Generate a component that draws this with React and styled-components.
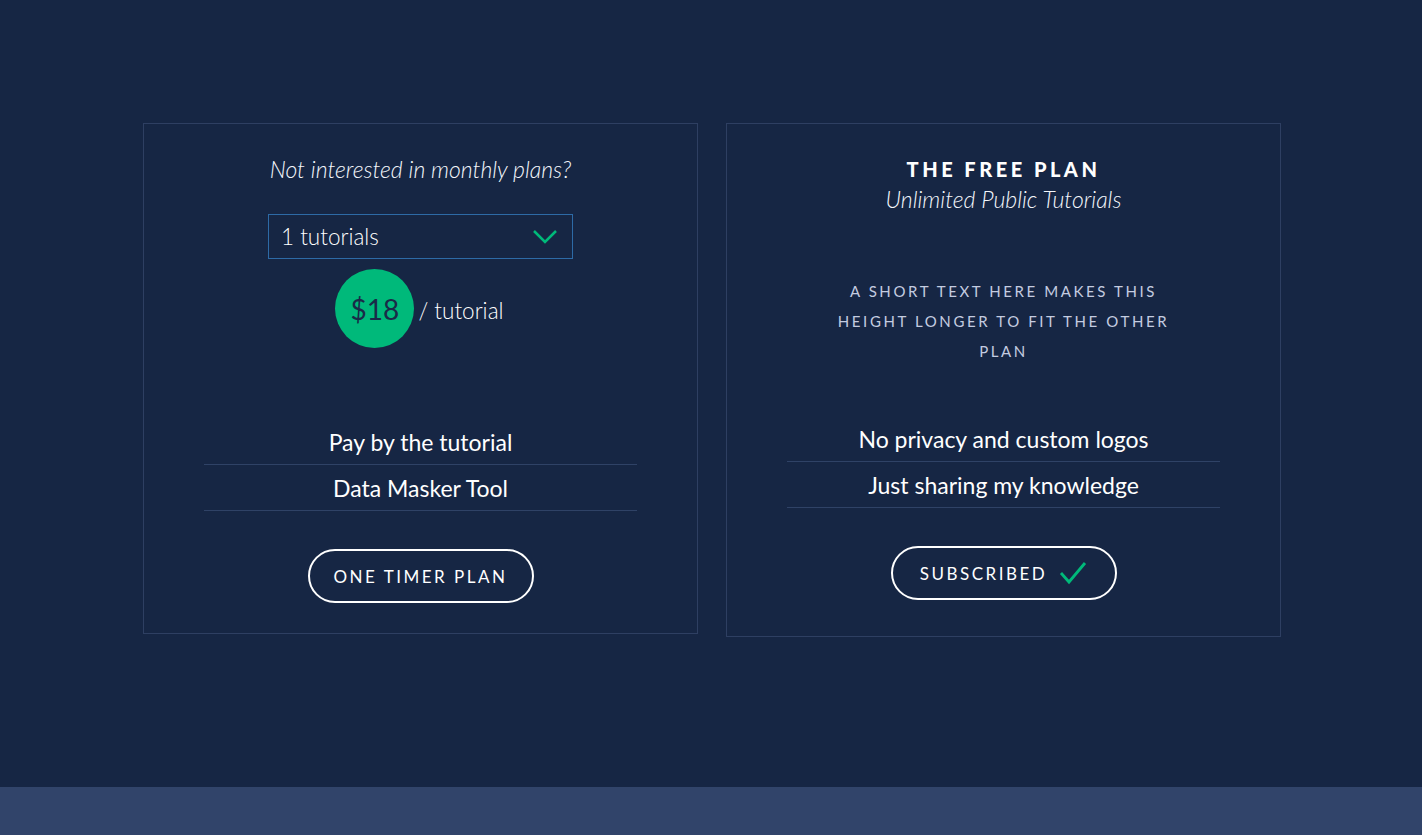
import styled, { createGlobalStyle } from 'styled-components';

const GlobalStyle = createGlobalStyle`
  html, body {
    margin: 0;
    padding: 0;
    background: #162644;
    font-family: Lato, "Open Sans", sans-serif;
    color: #ffffff;
  }
  * { box-sizing: border-box; }
`;

const Page = styled.div`
  min-height: 835px;
  display: flex;
  flex-direction: column;
`;

const Section = styled.section`
  height: 787px;
  padding: 123px 0 0 2px;
  display: flex;
  justify-content: center;
  align-items: flex-start;
  gap: 28px;
`;

const Footer = styled.footer`
  flex: 1;
  height: 48px;
  background: #31446a;
`;

const Card = styled.div`
  width: 555px;
  border: 1px solid #2e3f62;
  padding: 30px 60px ${p => p.bottom || 30}px;
  display: flex;
  flex-direction: column;
  align-items: center;
  text-align: center;
`;

const Lead = styled.p`
  margin: 0;
  font-size: 23px;
  line-height: 30px;
  font-style: italic;
  font-weight: 300;
  color: #f4f7fc;
`;

const PlanTitle = styled.h3`
  margin: 0;
  font-size: 20px;
  line-height: 30px;
  font-weight: 900;
  letter-spacing: 3.5px;
  text-transform: uppercase;
`;

const Select = styled.div`
  margin-top: 30px;
  width: 305px;
  height: 45px;
  border: 1px solid #2d6aa6;
  display: flex;
  align-items: center;
  justify-content: space-between;
  padding: 0 14px 0 12px;
  font-size: 22.5px;
  font-weight: 300;
`;

const PriceRow = styled.div`
  margin-top: 10px;
  display: flex;
  align-items: center;
  gap: 4px;
  margin-left: -2px;
`;

const PriceBubble = styled.div`
  width: 79px;
  height: 79px;
  border-radius: 50%;
  background: #00b97a;
  color: #1a2a48;
  font-size: 28px;
  font-weight: 400;
  display: flex;
  align-items: center;
  justify-content: center;
`;

const PriceUnit = styled.span`
  font-size: 22.5px;
  font-weight: 300;
  padding-top: 4px;
`;

const Blurb = styled.p`
  margin: 62px 0 0;
  font-size: 15px;
  line-height: 30px;
  letter-spacing: 2.6px;
  text-transform: uppercase;
  color: #c4cce0;
  font-weight: 400;
`;

const Features = styled.ul`
  list-style: none;
  margin: ${p => p.top}px 0 0;
  padding: 0;
  width: 100%;
`;

const Feature = styled.li`
  height: 46px;
  line-height: 46px;
  font-size: 23px;
  border-bottom: 1px solid #2f4266;
`;

const PillButton = styled.button`
  margin-top: 38px;
  width: 226px;
  height: 54px;
  border: 2px solid #ffffff;
  border-radius: 27px;
  background: transparent;
  color: #ffffff;
  font-family: inherit;
  font-size: 17px;
  letter-spacing: 2.5px;
  text-transform: uppercase;
  display: flex;
  align-items: center;
  justify-content: center;
  gap: 12px;
  padding: 0;
`;

function Chevron() {
  return (
    <svg width="26" height="16" viewBox="0 0 26 16">
      <path d="M2 2 L13 13 L24 2" fill="none" stroke="#00b97a" strokeWidth="2.5" />
    </svg>
  );
}

function Check() {
  return (
    <svg width="28" height="24" viewBox="0 0 28 24">
      <path d="M2 12 L10 21 L26 2" fill="none" stroke="#00b97a" strokeWidth="2.8" />
    </svg>
  );
}

export default function App() {
  return (
    <Page>
      <GlobalStyle />
      <Section>
        <Card>
          <Lead>Not interested in monthly plans?</Lead>
          <Select>
            <span>1 tutorials</span>
            <Chevron />
          </Select>
          <PriceRow>
            <PriceBubble>$18</PriceBubble>
            <PriceUnit>/ tutorial</PriceUnit>
          </PriceRow>
          <Features top={71}>
            <Feature>Pay by the tutorial</Feature>
            <Feature>Data Masker Tool</Feature>
          </Features>
          <PillButton>One timer plan</PillButton>
        </Card>

        <Card bottom={36}>
          <PlanTitle>The free plan</PlanTitle>
          <Lead>Unlimited Public Tutorials</Lead>
          <Blurb>
            A short text here makes this<br />
            height longer to fit the other<br />
            plan
          </Blurb>
          <Features top={50}>
            <Feature>No privacy and custom logos</Feature>
            <Feature>Just sharing my knowledge</Feature>
          </Features>
          <PillButton>
            Subscribed
            <Check />
          </PillButton>
        </Card>
      </Section>
      <Footer />
    </Page>
  );
}
